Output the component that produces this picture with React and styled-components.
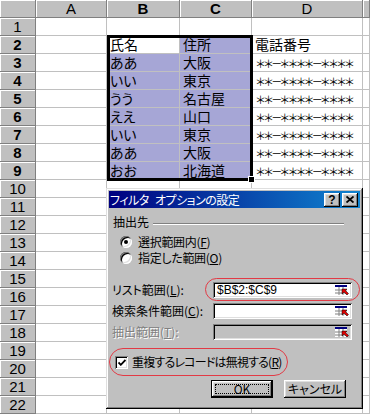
import React from 'react';
import styled, { createGlobalStyle, css } from 'styled-components';

const GlobalStyle = createGlobalStyle`
  html, body {
    margin: 0;
    padding: 0;
    background: #fff;
  }
  body {
    font-family: "Noto Sans CJK JP", sans-serif;
    font-feature-settings: "palt";
    overflow: hidden;
  }
`;

const Screen = styled.div`
  position: relative;
  width: 370px;
  height: 415px;
  overflow: hidden;
  background: #fff;
`;

/* ---------- sheet ---------- */

const Sheet = styled.div`
  display: grid;
  grid-template-columns: 36px 71px 73px 72px 111px 1fr;
  grid-auto-rows: 18px;
`;

const HeaderCell = styled.div`
  box-sizing: border-box;
  background: #c0c0c0;
  border-right: 1px solid #808080;
  border-bottom: 1px solid #808080;
  box-shadow: inset 1px 1px 0 #fff;
  display: flex;
  align-items: center;
  justify-content: center;
  font-family: "Liberation Sans", Arial, sans-serif;
  font-size: 15px;
  line-height: 17px;
  font-weight: ${({ $active }) => ($active ? 700 : 400)};
  color: #000;
`;

const Cell = styled.div`
  box-sizing: border-box;
  border-right: 1px solid #c0c0c0;
  border-bottom: 1px solid #c0c0c0;
  background: ${({ $selected }) => ($selected ? '#a6a6d6' : '#fff')};
  padding-left: 3px;
  display: flex;
  align-items: flex-end;
  font-size: 14px;
  line-height: 17px;
  color: #000;
  white-space: nowrap;
`;

const Phone = styled.span`
  font-size: 11px;
  font-feature-settings: normal;
  letter-spacing: -2.9px;
  line-height: 15px;
`;

const Selection = styled.div`
  position: absolute;
  left: 107px;
  top: 35px;
  width: 146px;
  height: 146px;
  box-sizing: border-box;
  border: 3px solid #000;
  pointer-events: none;
`;

const FillHandle = styled.div`
  position: absolute;
  left: 248px;
  top: 176px;
  width: 5px;
  height: 5px;
  background: #000;
  border: 1px solid #fff;
`;

/* ---------- dialog ---------- */

const Dialog = styled.div`
  position: absolute;
  left: 106px;
  top: 188px;
  width: 257px;
  height: 221px;
  box-sizing: border-box;
  padding: 3px;
  background: #c0c0c0;
  box-shadow: inset -1px -1px 0 #000, inset 1px 1px 0 #dfdfdf,
    inset -2px -2px 0 #808080, inset 2px 2px 0 #fff;
  display: flex;
  flex-direction: column;
  font-size: 12px;
  color: #000;
`;

const TitleBar = styled.div`
  height: 17px;
  background: linear-gradient(90deg, #000080, #1084d0);
  display: flex;
  align-items: center;
  justify-content: space-between;
  padding: 0 2px 0 1px;
  color: #fff;
  font-size: 12px;
  letter-spacing: -0.5px;
  word-spacing: 4px;
  line-height: 17px;
  white-space: nowrap;
`;

const CaptionButtons = styled.div`
  display: flex;
  gap: 2px;
`;

const CaptionButton = styled.div`
  width: 16px;
  height: 14px;
  box-sizing: border-box;
  background: #c0c0c0;
  box-shadow: inset -1px -1px 0 #000, inset 1px 1px 0 #fff,
    inset -2px -2px 0 #808080, inset 2px 2px 0 #dfdfdf;
  display: flex;
  align-items: center;
  justify-content: center;
  color: #000;
  font-family: "Liberation Sans", Arial, sans-serif;
  font-weight: 700;
  font-size: 12px;
  letter-spacing: 0;
  line-height: 12px;
`;

const Group = styled.div`
  margin: 7px 16px 0 4px;
  display: flex;
  align-items: center;
  gap: 4px;
  height: 14px;
  line-height: 14px;
  &::after {
    content: '';
    flex: 1;
    height: 0;
    border-top: 1px solid #808080;
    border-bottom: 1px solid #fff;
    margin-top: 4px;
  }
`;

const RadioList = styled.div`
  margin: 5px 0 0 11px;
  display: flex;
  flex-direction: column;
`;

const Option = styled.label`
  height: 16px;
  display: flex;
  align-items: center;
  gap: 6px;
  line-height: 16px;
  letter-spacing: -0.3px;
`;

const Radio = styled.span`
  position: relative;
  width: 12px;
  height: 12px;
  border-radius: 50%;
  background: #fff;
  box-shadow: inset 1px 1px 0 #808080, inset -1px -1px 0 #fff,
    inset 2px 2px 0 #000, inset -2px -2px 0 #dfdfdf;
  ${({ $checked }) =>
    $checked &&
    css`
      &::after {
        content: '';
        position: absolute;
        left: 4px;
        top: 4px;
        width: 4px;
        height: 4px;
        border-radius: 50%;
        background: #000;
      }
    `}
`;

const Fields = styled.div`
  margin: 16px 0 0 3px;
  display: grid;
  grid-template-columns: 101px 139px;
  grid-auto-rows: 16px;
  row-gap: 5px;
  align-items: center;
`;

const FieldLabel = styled.span`
  line-height: 16px;
  white-space: nowrap;
  color: ${({ $disabled }) => ($disabled ? '#808080' : '#000')};
  text-shadow: ${({ $disabled }) => ($disabled ? '1px 1px 0 #fff' : 'none')};
`;

const Field = styled.div`
  position: relative;
  height: 16px;
  box-sizing: border-box;
  padding: 0 2px 0 4px;
  background: ${({ $disabled }) => ($disabled ? '#c0c0c0' : '#fff')};
  box-shadow: inset 1px 1px 0 #808080, inset -1px -1px 0 #fff,
    inset 2px 2px 0 #000, inset -2px -2px 0 #dfdfdf;
  display: flex;
  align-items: center;
  justify-content: space-between;
  font-family: "Liberation Sans", Arial, sans-serif;
  font-size: 12px;
  ${({ $marked }) =>
    $marked &&
    css`
      &::after {
        content: '';
        position: absolute;
        left: -8px;
        right: -8px;
        top: -4px;
        bottom: -3px;
        border: 1.5px solid #e23a45;
        border-radius: 12px;
      }
    `}
`;

const RefButton = styled.span`
  width: 16px;
  height: 13px;
  display: flex;
`;

const CheckRow = styled.label`
  position: relative;
  margin: 15px 0 0 6px;
  align-self: flex-start;
  height: 14px;
  display: flex;
  align-items: center;
  gap: 4px;
  line-height: 14px;
  white-space: nowrap;
  &::after {
    content: '';
    position: absolute;
    left: -6px;
    right: -7px;
    top: -7px;
    bottom: -7px;
    border: 1.5px solid #e23a45;
    border-radius: 14px;
  }
`;

const CheckText = styled.span`
  letter-spacing: -0.8px;
`;

const CheckBox = styled.span`
  width: 13px;
  height: 13px;
  box-sizing: border-box;
  background: #fff;
  box-shadow: inset 1px 1px 0 #808080, inset -1px -1px 0 #fff,
    inset 2px 2px 0 #000, inset -2px -2px 0 #dfdfdf;
  display: flex;
  align-items: center;
  justify-content: center;
`;

const Buttons = styled.div`
  margin: 11px 14px 0 0;
  display: flex;
  justify-content: flex-end;
  gap: 11px;
`;

const Button = styled.div`
  position: relative;
  flex: 0 0 62px;
  height: 18px;
  box-sizing: border-box;
  background: #c0c0c0;
  box-shadow: inset -1px -1px 0 #000, inset 1px 1px 0 #fff,
    inset -2px -2px 0 #808080, inset 2px 2px 0 #dfdfdf;
  display: flex;
  align-items: center;
  justify-content: center;
  font-size: 12px;
  line-height: 14px;
  ${({ $default }) =>
    $default &&
    css`
      border: 1px solid #000;
      &::after {
        content: '';
        position: absolute;
        left: 3px;
        right: 3px;
        top: 3px;
        bottom: 3px;
        border: 1px dotted #000;
      }
    `}
`;

const RefIcon = () => (
  <svg width="16" height="13" viewBox="0 0 16 13">
    <rect x="1" y="1" width="12" height="10" fill="#fff" />
    <rect x="1" y="1" width="12" height="2" fill="#000080" />
    <path d="M1 6h12M1 9h12M5 3v8M9 3v8" stroke="#808080" strokeWidth="1" />
    <path d="M8 5l5 0-1.5 1.5 3 3-1.5 1.5-3-3L8 10z" fill="#e00000" stroke="#000" strokeWidth="0.5" />
  </svg>
);

const CloseGlyph = () => (
  <svg width="8" height="7" viewBox="0 0 8 7">
    <path d="M0.5 0.5l7 6M7.5 0.5l-7 6" stroke="#000" strokeWidth="1.8" />
  </svg>
);

const CheckGlyph = () => (
  <svg width="8" height="7" viewBox="0 0 8 7">
    <path d="M0.5 3.5l2.3 2.3L7.5 1" stroke="#000" strokeWidth="1.8" fill="none" />
  </svg>
);

const PHONE = '＊＊－＊＊＊＊－＊＊＊＊';

const DATA = {
  2: ['氏名', '住所', '電話番号'],
  3: ['ああ', '大阪', PHONE],
  4: ['いい', '東京', PHONE],
  5: ['うう', '名古屋', PHONE],
  6: ['ええ', '山口', PHONE],
  7: ['いい', '東京', PHONE],
  8: ['ああ', '大阪', PHONE],
  9: ['おお', '北海道', PHONE],
};

const COLS = ['A', 'B', 'C', 'D', ''];

function renderRow(r) {
  const row = DATA[r] || [];
  const inSel = r >= 2 && r <= 9;
  return (
    <React.Fragment key={r}>
      <HeaderCell $active={inSel}>{r}</HeaderCell>
      <Cell />
      <Cell $selected={inSel && r !== 2}>{row[0]}</Cell>
      <Cell $selected={inSel}>{row[1]}</Cell>
      <Cell>{row[2] === PHONE ? <Phone>{PHONE}</Phone> : row[2]}</Cell>
      <Cell />
    </React.Fragment>
  );
}

export default function App() {
  const rows = Array.from({ length: 22 }, (_, i) => i + 1);
  return (
    <Screen>
      <GlobalStyle />
      <Sheet>
        <HeaderCell />
        {COLS.map((c, i) => (
          <HeaderCell key={i} $active={c === 'B' || c === 'C'}>{c}</HeaderCell>
        ))}
        {rows.map(renderRow)}
      </Sheet>
      <Selection />
      <FillHandle />

      <Dialog>
        <TitleBar>
          <span>フィルタ オプションの設定</span>
          <CaptionButtons>
            <CaptionButton>?</CaptionButton>
            <CaptionButton><CloseGlyph /></CaptionButton>
          </CaptionButtons>
        </TitleBar>

        <Group>抽出先</Group>
        <RadioList>
          <Option>
            <Radio $checked />
            <span>選択範囲内(<u>F</u>)</span>
          </Option>
          <Option>
            <Radio />
            <span>指定した範囲(<u>O</u>)</span>
          </Option>
        </RadioList>

        <Fields>
          <FieldLabel>リスト範囲(<u>L</u>):</FieldLabel>
          <Field $marked>
            <span>$B$2:$C$9</span>
            <RefButton><RefIcon /></RefButton>
          </Field>
          <FieldLabel>検索条件範囲(<u>C</u>):</FieldLabel>
          <Field>
            <span />
            <RefButton><RefIcon /></RefButton>
          </Field>
          <FieldLabel $disabled>抽出範囲(<u>T</u>):</FieldLabel>
          <Field $disabled>
            <span />
            <RefButton><RefIcon /></RefButton>
          </Field>
        </Fields>

        <CheckRow>
          <CheckBox><CheckGlyph /></CheckBox>
          <CheckText>重複するレコードは無視する(<u>R</u>)</CheckText>
        </CheckRow>

        <Buttons>
          <Button $default>OK</Button>
          <Button>キャンセル</Button>
        </Buttons>
      </Dialog>
    </Screen>
  );
}
